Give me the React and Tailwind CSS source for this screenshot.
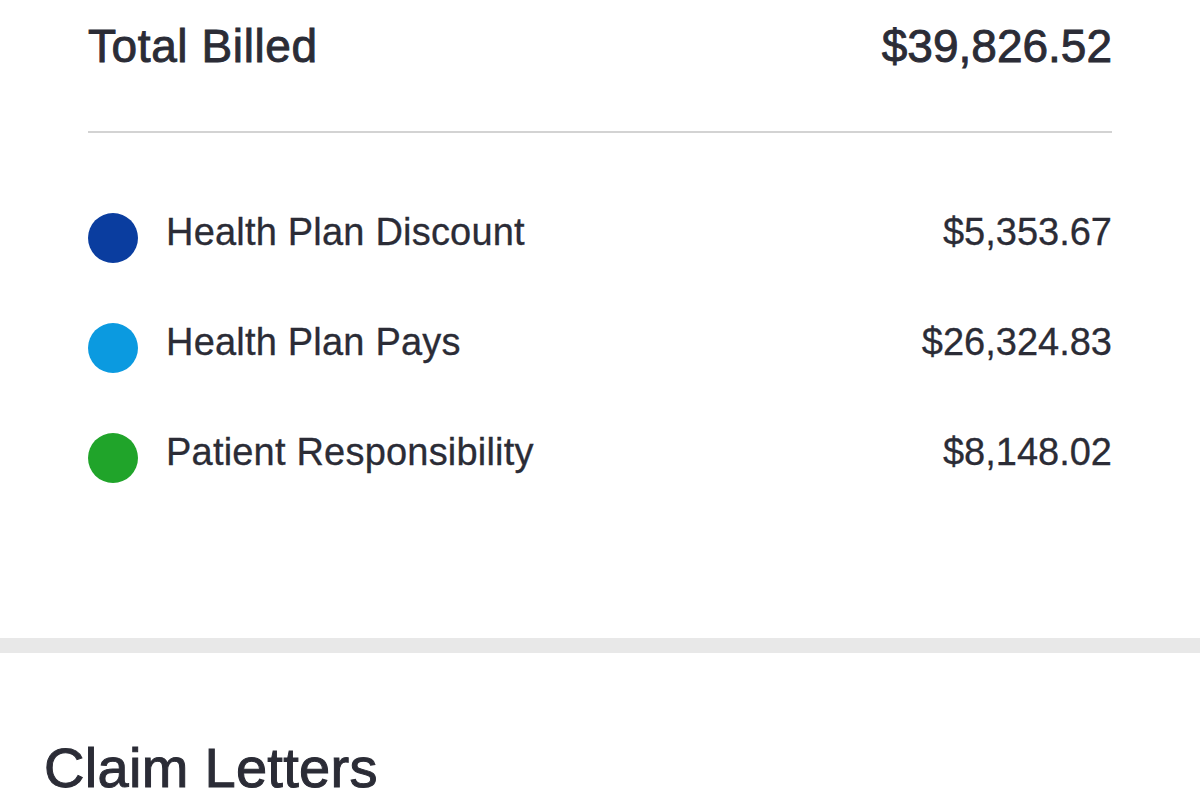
import React from 'react';

const ROWS = [
  { label: 'Health Plan Discount', amount: '$5,353.67', color: 'bg-[#0a3d9f]' },
  { label: 'Health Plan Pays', amount: '$26,324.83', color: 'bg-[#0b9ae0]' },
  { label: 'Patient Responsibility', amount: '$8,148.02', color: 'bg-[#20a42a]' },
];

const BreakdownRow = ({ label, amount, color }) => (
  <div className="flex items-center h-[110px]">
    <div className={`w-[50px] h-[50px] rounded-full flex-shrink-0 ${color}`} />
    <div className="ml-[28px] flex-1 flex justify-between text-[38px] leading-[38px] mb-[13px] [-webkit-text-stroke:0.3px_#2b2c36]">
      <span className="tracking-[0.2px]">{label}</span>
      <span>{amount}</span>
    </div>
  </div>
);

export default function App() {
  return (
    <div
      className="w-full min-h-[800px] bg-white text-[#2b2c36] overflow-hidden"
      style={{ fontFamily: '"Liberation Sans", Arial, sans-serif' }}
    >
      <section className="px-[88px] pt-[23px] pb-[125px]">
        <div className="flex justify-between text-[46px] leading-[46px] [-webkit-text-stroke:0.9px_#2b2c36]">
          <span className="tracking-[0.6px]">Total Billed</span>
          <span>$39,826.52</span>
        </div>
        <div className="mt-[62px] h-[2px] bg-[#d3d3d3]" />
        <div className="mt-[50px]">
          {ROWS.map((row) => (
            <BreakdownRow key={row.label} {...row} />
          ))}
        </div>
      </section>
      <div className="h-[15px] bg-[#e8e8e8]" />
      <section className="px-[44px] pt-[87px]">
        <h2 className="text-[56px] leading-[56px] tracking-[0.3px] [-webkit-text-stroke:1px_#2b2c36]">Claim Letters</h2>
      </section>
    </div>
  );
}
